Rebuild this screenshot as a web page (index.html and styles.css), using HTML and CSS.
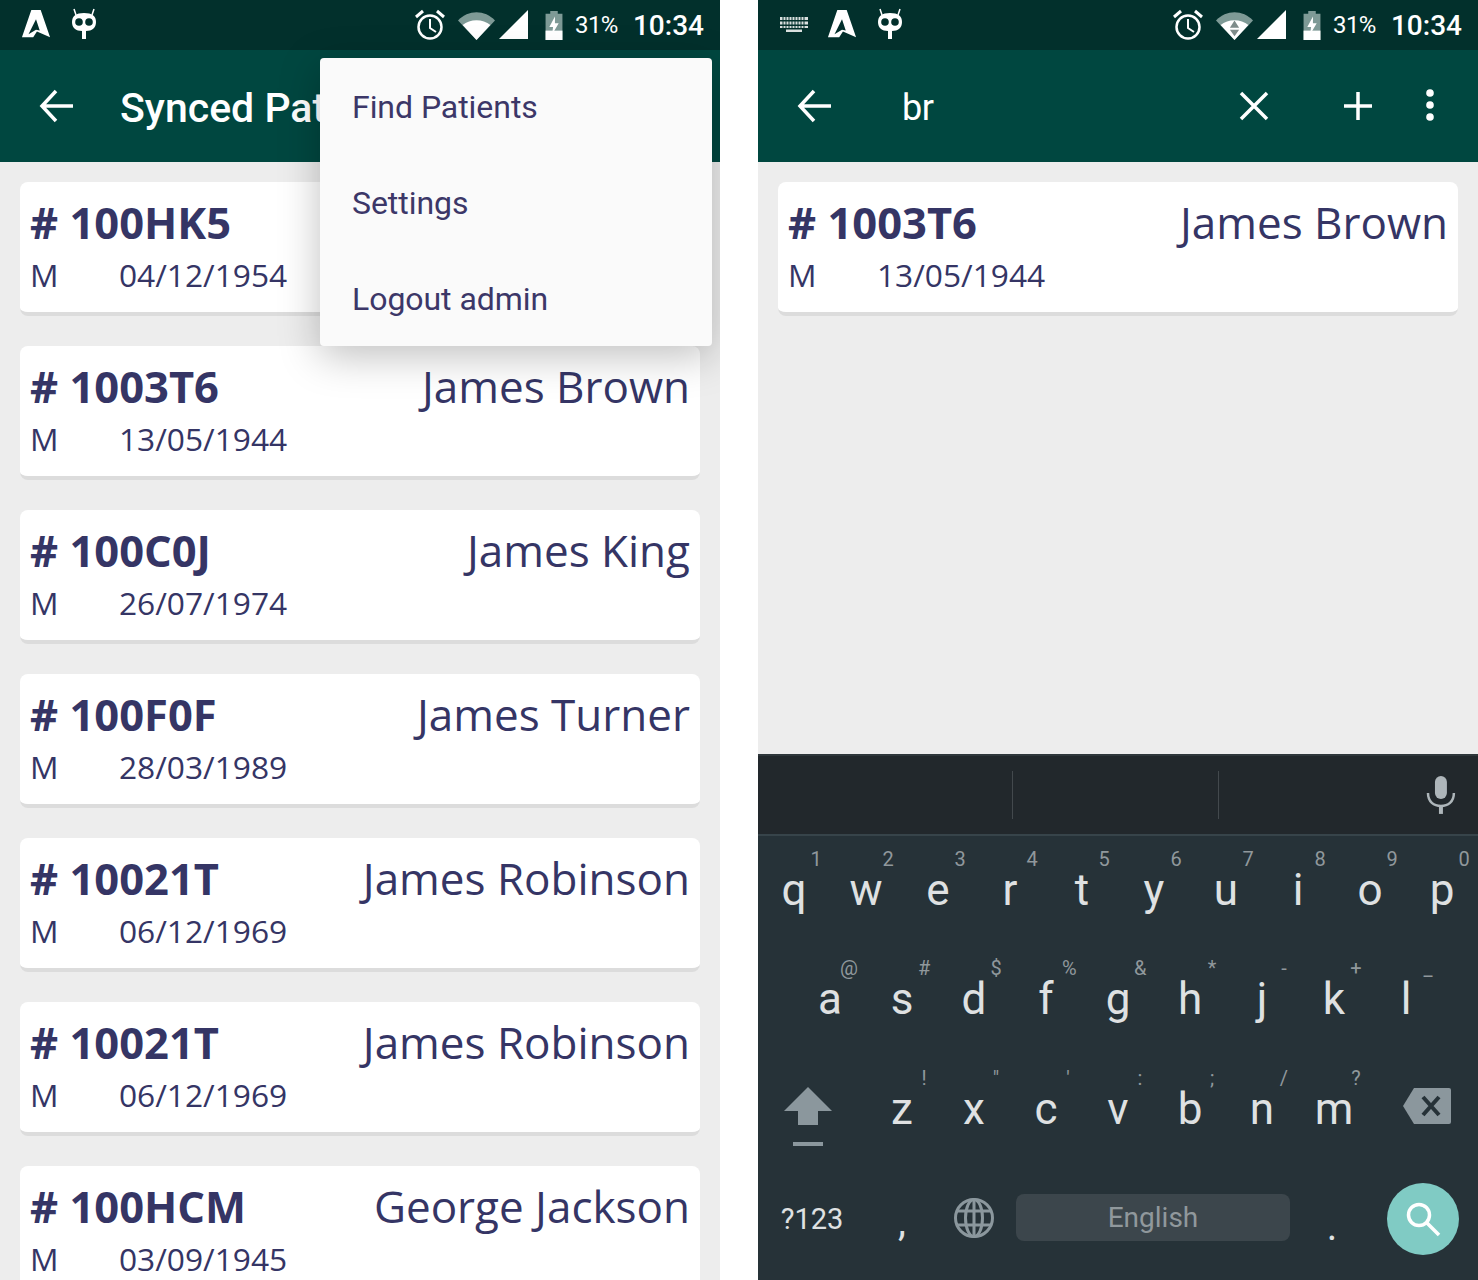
FILE: index.html
```html
<!DOCTYPE html>
<html lang="en">
<head>
    <meta charset="UTF-8">
    <title>Synced Patients</title>
    <link rel="stylesheet" href="styles.css">
</head>
<body>

<svg class="defs" width="0" height="0">
    <symbol id="i-logo" viewBox="0 0 32 32">
        <path d="M11 1h10l10 29-14-6-4 6H1zM16 11 8 27l8-5 4 1z" fill="#fff" fill-rule="evenodd"/>
    </symbol>
    <symbol id="i-cid" viewBox="0 0 32 32">
        <path d="M6 1l2 6M26 1l-2 6" stroke="#fff" stroke-width="1.500"/>
        <path d="M16 5c8 0 12 3 12 9 0 6-4 9-10 9v8h-4v-8C8 23 4 20 4 14c0-6 4-9 12-9z" fill="#fff"/>
        <circle cx="11" cy="14" r="3.800" fill="#02302c"/>
        <circle cx="21" cy="14" r="3.800" fill="#02302c"/>
    </symbol>
    <symbol id="i-alarm" viewBox="0 0 32 32">
        <circle cx="16" cy="18" r="11.500" fill="none" stroke="#fff" stroke-width="2.500"/>
        <path d="M16 10v9l6 4" fill="none" stroke="#fff" stroke-width="2"/>
        <path d="M2 8l7-6M30 8l-7-6" stroke="#fff" stroke-width="3"/>
    </symbol>
    <symbol id="i-battery" viewBox="0 0 20 32">
        <path d="M6 1h8v3h5v28H1V4h5z" fill="#7e9a96"/>
        <path d="M1 22h18v10H1z" fill="#fff"/>
        <path d="M11 7 5 18h4l-1 8 7-12h-4z" fill="#fff"/>
    </symbol>
    <symbol id="i-back" viewBox="0 0 36 36">
        <path d="M34 18H4M17 3 3 18l14 15" fill="none" stroke="#fff" stroke-width="3.500"/>
    </symbol>
</svg>

<div class="screens">

    <section class="phone">
        <div class="status-bar">
            <svg class="st-logo"><use href="#i-logo"/></svg>
            <svg class="st-cid"><use href="#i-cid"/></svg>
            <div class="status-right">
                <svg class="st-alarm"><use href="#i-alarm"/></svg>
                <svg class="st-wifi" viewBox="0 0 40 30">
                    <path d="M0 9C11-3 29-3 40 9L20 30z" fill="#7e9a96"/>
                    <path d="M5 14C13 7 27 7 35 14L20 30z" fill="#fff"/>
                </svg>
                <svg class="st-signal" viewBox="0 0 30 30"><path d="M30 0v30H0z" fill="#fff"/></svg>
                <svg class="st-battery"><use href="#i-battery"/></svg>
                <span class="st-pct">31%</span>
                <span class="st-time">10:34</span>
            </div>
        </div>
        <header class="toolbar">
            <svg class="tb-back"><use href="#i-back"/></svg>
            <span class="tb-title">Synced Patients</span>
        </header>
        <main class="list">
            <article class="card">
                <div class="card-top"><span class="pid"># 100HK5</span></div>
                <div class="card-sub"><span class="sex">M</span><span>04/12/1954</span></div>
            </article>
            <article class="card">
                <div class="card-top"><span class="pid"># 1003T6</span><span class="pname">James Brown</span></div>
                <div class="card-sub"><span class="sex">M</span><span>13/05/1944</span></div>
            </article>
            <article class="card">
                <div class="card-top"><span class="pid"># 100C0J</span><span class="pname">James King</span></div>
                <div class="card-sub"><span class="sex">M</span><span>26/07/1974</span></div>
            </article>
            <article class="card">
                <div class="card-top"><span class="pid"># 100F0F</span><span class="pname">James Turner</span></div>
                <div class="card-sub"><span class="sex">M</span><span>28/03/1989</span></div>
            </article>
            <article class="card">
                <div class="card-top"><span class="pid"># 10021T</span><span class="pname">James Robinson</span></div>
                <div class="card-sub"><span class="sex">M</span><span>06/12/1969</span></div>
            </article>
            <article class="card">
                <div class="card-top"><span class="pid"># 10021T</span><span class="pname">James Robinson</span></div>
                <div class="card-sub"><span class="sex">M</span><span>06/12/1969</span></div>
            </article>
            <article class="card">
                <div class="card-top"><span class="pid"># 100HCM</span><span class="pname">George Jackson</span></div>
                <div class="card-sub"><span class="sex">M</span><span>03/09/1945</span></div>
            </article>
        </main>
        <nav class="menu">
            <div class="menu-item">Find Patients</div>
            <div class="menu-item">Settings</div>
            <div class="menu-item">Logout admin</div>
        </nav>
    </section>

    <section class="phone">
        <div class="status-bar">
            <svg class="st-kbd" viewBox="0 0 28 16">
                <path d="M0 1h28v3H0zM0 5.500h28v3H0zM0 10h28v2H0zM6 13.500h16V16H6z" fill="#fff" opacity=".85"/>
                <path d="M3 0v13M6 0v13M9 0v13M12 0v13M15 0v13M18 0v13M21 0v13M24 0v13" stroke="#02302c" stroke-width="1"/>
            </svg>
            <svg class="st-logo"><use href="#i-logo"/></svg>
            <svg class="st-cid"><use href="#i-cid"/></svg>
            <div class="status-right">
                <svg class="st-alarm"><use href="#i-alarm"/></svg>
                <svg class="st-wifi" viewBox="0 0 40 30">
                    <path d="M0 9C11-3 29-3 40 9L20 30z" fill="#7e9a96"/>
                    <path d="M5 14C13 7 27 7 35 14L20 30z" fill="#fff"/>
                    <path d="M20 9l-5 8h10zM20 26l-5-7h10z" fill="#7e8c8a"/>
                </svg>
                <svg class="st-signal" viewBox="0 0 30 30"><path d="M30 0v30H0z" fill="#fff"/></svg>
                <svg class="st-battery"><use href="#i-battery"/></svg>
                <span class="st-pct">31%</span>
                <span class="st-time">10:34</span>
            </div>
        </div>
        <header class="toolbar">
            <svg class="tb-back"><use href="#i-back"/></svg>
            <span class="tb-query">br</span>
            <svg class="tb-close" viewBox="0 0 30 30"><path d="M2 2l26 26M28 2 2 28" stroke="#fff" stroke-width="3.500"/></svg>
            <svg class="tb-plus" viewBox="0 0 30 30"><path d="M15 1v28M1 15h28" stroke="#fff" stroke-width="3.500"/></svg>
            <svg class="tb-more" viewBox="0 0 10 34">
                <circle cx="5" cy="5" r="3.800" fill="#fff"/>
                <circle cx="5" cy="17" r="3.800" fill="#fff"/>
                <circle cx="5" cy="29" r="3.800" fill="#fff"/>
            </svg>
        </header>
        <main class="list">
            <article class="card">
                <div class="card-top"><span class="pid"># 1003T6</span><span class="pname">James Brown</span></div>
                <div class="card-sub"><span class="sex">M</span><span>13/05/1944</span></div>
            </article>
        </main>
        <div class="keyboard">
            <div class="suggestions">
                <div class="sugg"></div>
                <div class="sugg sugg-mid"></div>
                <div class="sugg"></div>
                <svg class="mic" viewBox="0 0 30 40">
                    <rect x="9" y="1" width="12" height="23" rx="6" fill="#aeb6ba"/>
                    <path d="M2 18c0 9 6 13 13 13s13-4 13-13" fill="none" stroke="#aeb6ba" stroke-width="2.500"/>
                    <path d="M15 30v9" stroke="#aeb6ba" stroke-width="4"/>
                </svg>
            </div>
            <div class="keys">
                <div class="key-row row-1">
                    <div class="key">q<sup class="hint">1</sup></div>
                    <div class="key">w<sup class="hint">2</sup></div>
                    <div class="key">e<sup class="hint">3</sup></div>
                    <div class="key">r<sup class="hint">4</sup></div>
                    <div class="key">t<sup class="hint">5</sup></div>
                    <div class="key">y<sup class="hint">6</sup></div>
                    <div class="key">u<sup class="hint">7</sup></div>
                    <div class="key">i<sup class="hint">8</sup></div>
                    <div class="key">o<sup class="hint">9</sup></div>
                    <div class="key">p<sup class="hint">0</sup></div>
                </div>
                <div class="key-row row-2">
                    <div class="key">a<sup class="hint hint-at">@</sup></div>
                    <div class="key">s<sup class="hint">#</sup></div>
                    <div class="key">d<sup class="hint">$</sup></div>
                    <div class="key">f<sup class="hint">%</sup></div>
                    <div class="key">g<sup class="hint">&amp;</sup></div>
                    <div class="key">h<sup class="hint">*</sup></div>
                    <div class="key">j<sup class="hint">-</sup></div>
                    <div class="key">k<sup class="hint">+</sup></div>
                    <div class="key">l<sup class="hint">_</sup></div>
                </div>
                <div class="key-row row-3">
                    <div class="key key-shift">
                        <svg class="shift" viewBox="0 0 48 60">
                            <path d="M24 0 48 24H34v14H14V24H0z" fill="#8b979d"/>
                            <path d="M9 55h30v4H9z" fill="#8b979d"/>
                        </svg>
                    </div>
                    <div class="key">z<sup class="hint">!</sup></div>
                    <div class="key">x<sup class="hint">"</sup></div>
                    <div class="key">c<sup class="hint">'</sup></div>
                    <div class="key">v<sup class="hint">:</sup></div>
                    <div class="key">b<sup class="hint">;</sup></div>
                    <div class="key">n<sup class="hint">/</sup></div>
                    <div class="key">m<sup class="hint">?</sup></div>
                    <div class="key key-del">
                        <svg class="del" viewBox="0 0 48 36">
                            <path d="M11 0h35a2 2 0 0 1 2 2v32a2 2 0 0 1-2 2H11L0 18z" fill="#8b979d"/>
                            <path d="M20 9l16 18M36 9 20 27" stroke="#263238" stroke-width="4"/>
                        </svg>
                    </div>
                </div>
                <div class="key-row row-4">
                    <div class="key key-sym">?123</div>
                    <div class="key key-comma">,</div>
                    <div class="key key-globe">
                        <svg class="globe" viewBox="0 0 40 40">
                            <g fill="none" stroke="#8b979d" stroke-width="3">
                                <circle cx="20" cy="20" r="18.500"/>
                                <ellipse cx="20" cy="20" rx="8.500" ry="18.500"/>
                                <path d="M20 1v38M3 13h34M3 27h34"/>
                            </g>
                        </svg>
                    </div>
                    <div class="space-bar">English</div>
                    <div class="key key-period">.</div>
                    <div class="key key-search">
                        <div class="search-btn">
                            <svg class="search-ico" viewBox="0 0 36 36">
                                <circle cx="14" cy="14" r="10.500" fill="none" stroke="#fff" stroke-width="3.500"/>
                                <path d="M22 22l12 12" stroke="#fff" stroke-width="3.500"/>
                            </svg>
                        </div>
                    </div>
                </div>
            </div>
        </div>
    </section>

</div>

</body>
</html>
```

FILE: styles.css
```css
* {
    box-sizing: border-box;
}

html, body {
    margin: 0;
    height: 1280px;
    overflow: hidden;
    background-color: #fff;
}

.defs {
    display: block;
    height: 0;
}

.screens {
    display: flex;
    gap: 38px;
    font-family: Roboto, sans-serif;
}

.phone {
    position: relative;
    width: 720px;
    height: 1280px;
    overflow: hidden;
    display: flex;
    flex-direction: column;
    background-color: #ededed;
}

/* status bar */
.status-bar {
    flex: 0 0 50px;
    display: flex;
    align-items: center;
    padding: 0 16px 0 20px;
    background-color: #02302c;
    color: #fff;
}

.status-right {
    margin-left: auto;
    display: flex;
    align-items: center;
}

.st-kbd { width: 28px; height: 16px; margin-right: 18px; margin-left: 2px; margin-top: -2px; }
.st-logo { width: 32px; height: 30px; margin-top: -2px; }
.st-cid { width: 32px; height: 32px; margin-left: 16px; margin-top: -2px; }
.st-alarm { width: 32px; height: 32px; margin-right: 12px; }
.st-wifi { width: 37px; height: 28px; margin-right: 4px; margin-top: 1px; }
.st-signal { width: 29px; height: 29px; margin-right: 16px; margin-top: -1px; }
.st-battery { width: 20px; height: 30px; margin-top: -1px; }
.st-pct { font-size: 24px; margin-left: 11px; letter-spacing: -0.5px; }
.st-time { font-size: 28px; font-weight: 500; margin-left: 15px; }

/* toolbar */
.toolbar {
    flex: 0 0 112px;
    display: flex;
    align-items: center;
    padding-left: 39px;
    background-color: #004740;
    color: #fff;
}

.tb-back { width: 36px; height: 36px; }

.tb-title {
    margin-left: 45px;
    padding-top: 4px;
    font-size: 41px;
    font-weight: 500;
    white-space: nowrap;
}

.tb-query {
    margin-left: 69px;
    padding-top: 4px;
    font-size: 36px;
    letter-spacing: -0.5px;
}

.tb-close { width: 30px; height: 30px; margin-left: auto; }
.tb-plus { width: 30px; height: 30px; margin-left: 74px; }
.tb-more { width: 10px; height: 34px; margin-left: 52px; margin-right: 43px; margin-top: -2px; }

/* patient cards */
.list {
    padding: 20px 20px 0;
    display: flex;
    flex-direction: column;
    gap: 30px;
    flex: 1;
    font-family: "Open Sans", sans-serif;
    color: #353565;
}

.card {
    flex: 0 0 134px;
    padding: 9px 10px 0;
    background-color: #fff;
    border-radius: 8px;
    border-bottom: 4px solid #dcdcdc;
}

.card-top {
    display: flex;
    justify-content: space-between;
    align-items: flex-start;
    height: 64px;
}

.pid {
    font-size: 43.500px;
    font-weight: 700;
    line-height: 64px;
}

.pname {
    font-size: 44px;
    line-height: 62px;
    white-space: nowrap;
}

.card-sub {
    display: flex;
    font-size: 31.700px;
    line-height: 40px;
}

.sex {
    flex: 0 0 89px;
}

/* overflow menu */
.menu {
    position: absolute;
    left: 320px;
    top: 58px;
    width: 392px;
    height: 288px;
    background-color: #fafafa;
    border-radius: 4px;
    box-shadow: 0 10px 40px rgba(0, 0, 0, 0.25);
    color: #3c3768;
}

.menu-item {
    height: 96px;
    line-height: 98px;
    padding-left: 32px;
    font-size: 32px;
    letter-spacing: -0.05px;
}

/* keyboard */
.keyboard {
    position: absolute;
    left: 0;
    right: 0;
    bottom: 0;
    height: 526px;
    background-color: #263238;
}

.suggestions {
    height: 82px;
    display: flex;
    align-items: center;
    background-color: #22282c;
    border-top: 2px solid #2f373b;
    border-bottom: 2px solid #37444a;
}

.sugg {
    width: 208px;
    height: 48px;
}

.sugg:first-child {
    width: 255px;
}

.sugg-mid {
    border-left: 1px solid #43494d;
    border-right: 1px solid #43494d;
}

.mic {
    width: 30px;
    height: 40px;
    margin-left: auto;
    margin-right: 22px;
}

.keys {
    color: #dfe1e2;
}

.key-row {
    display: flex;
    height: 110px;
    font-size: 44px;
}

.row-1 { height: 108px; }
.row-2 { padding-left: 36px; }
.row-3 { height: 110px; }

.key {
    position: relative;
    flex: 0 0 72px;
    display: flex;
    justify-content: center;
    align-items: center;
    line-height: 1;
}

.hint {
    position: absolute;
    left: 50%;
    margin-left: 16px;
    top: 11px;
    width: 12px;
    text-align: center;
    font-size: 20px;
    line-height: 24px;
    color: #90989c;
}

.row-2 .hint { top: 12px; }
.row-3 .hint { top: 12px; }
.row-2 .hint-at { margin-left: 10px; }

.key-shift { flex-basis: 108px; padding-right: 8px; }
.key-del { flex-basis: 108px; padding-left: 6px; }

.shift { width: 48px; height: 60px; margin-top: 16px; }
.del { width: 48px; height: 36px; margin-top: -6px; }

.key-sym {
    flex-basis: 108px;
    font-size: 29px;
}

.key-comma { padding-top: 6px; font-size: 40px; }
.globe { width: 40px; height: 40px; margin-top: -2px; }

.space-bar {
    width: 276px;
    height: 47px;
    margin-top: 30px;
    margin-left: 6px;
    border-radius: 8px;
    background-color: #3c464c;
    color: #90989c;
    font-size: 28px;
    line-height: 47px;
    text-align: center;
}

.key-period { margin-left: 6px; padding-top: 16px; font-size: 40px; }
.key-search { flex-basis: 110px; }

.search-btn {
    width: 72px;
    height: 72px;
    border-radius: 50%;
    background-color: #80cbc4;
    display: flex;
    align-items: center;
    justify-content: center;
}

.search-ico { width: 36px; height: 36px; }
```
